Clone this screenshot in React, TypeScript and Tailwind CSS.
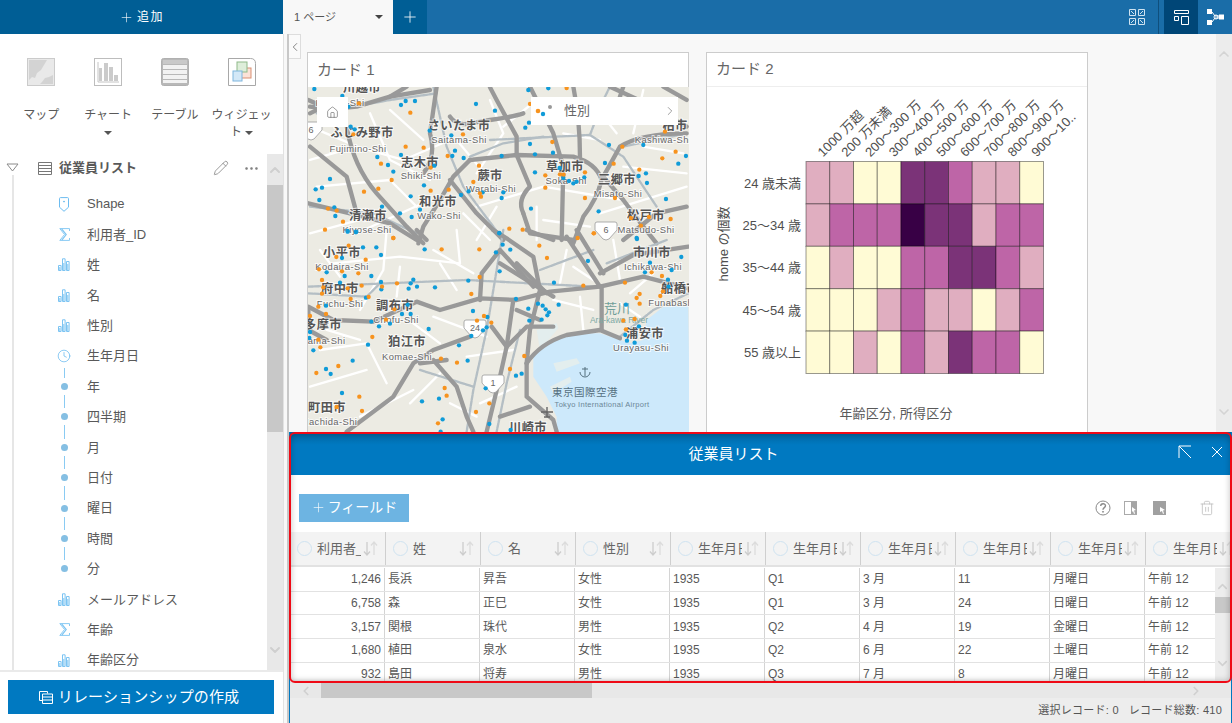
import React from "react";
import { Plus, ChevronLeft, ChevronRight, ChevronUp, ChevronDown, Clock, Pencil, Ellipsis, Home, Trash2 } from "lucide-react";

const BlueA = [[73,267],[775,265],[715,270],[347,303],[375,303],[333,315],[558,312],[615,332],[157,288],[175,320],[717,368],[706,383],[182,380],[194,388],[419,392],[484,406],[720,432],[957,435],[1060,435],[735,463],[789,458],[495,452],[333,465],[262,471],[487,468],[521,474],[635,468],[1188,468],[294,495],[945,489],[1165,491],[809,504],[310,515],[120,537],[735,517],[820,534],[837,543],[850,550],[860,545],[883,532],[1046,528],[1068,520],[1071,549],[77,568],[96,563],[402,556],[536,574],[578,577],[640,577],[513,585],[362,589],[635,594],[88,600],[276,620],[390,629],[723,626],[1128,597],[133,622],[136,648],[330,640],[365,651],[926,634],[173,693],[198,697],[628,699],[1040,714],[433,497]];
const OrangeA = [[830,264],[207,310],[361,338],[720,312],[519,403],[787,426],[997,440],[1125,395],[347,440],[401,443],[473,468],[1157,455],[1117,475],[273,491],[971,491],[422,503],[567,497],[1048,509],[885,517],[766,526],[810,523],[821,524],[305,540],[550,546],[766,563],[265,566],[222,575],[422,572],[476,569],[570,580],[573,590],[885,594],[975,594],[114,626],[140,632],[159,665],[1023,654],[1077,651],[1142,657],[105,689],[1053,677],[658,686],[698,689],[912,700],[190,403],[310,714]];
const BlueB = [[143,5],[168,5],[598,10],[608,44],[631,59],[588,67],[189,52],[229,52],[243,75],[374,58],[126,84],[80,127],[134,138],[214,138],[599,124],[864,93],[1011,27],[1050,98],[1035,127],[1144,81],[1115,120],[1104,149],[1106,170],[505,152],[762,158],[340,149],[332,160],[326,176],[351,170],[405,172],[243,156],[244,178],[120,158],[198,203],[78,227],[648,207],[714,221],[728,227],[737,238],[747,247],[742,256],[776,224],[685,236],[688,272],[725,269],[519,243],[562,261],[978,224],[306,252],[332,252],[323,224],[214,275],[237,289],[270,281],[386,297],[560,292],[549,301],[514,318],[1017,289],[976,315],[981,332],[1004,338],[30,306],[28,324],[40,361],[204,344],[477,346],[503,392],[158,392],[78,417],[92,432],[665,431],[648,437],[557,475],[126,489],[417,506],[366,514],[428,568],[568,582],[422,605],[632,600]];
const OrangeB = [[280,24],[146,47],[425,58],[538,58],[718,47],[833,24],[881,10],[109,81],[197,89],[741,84],[57,118],[126,124],[175,130],[66,150],[185,167],[143,175],[70,172],[66,191],[291,160],[246,170],[539,141],[514,192],[152,207],[206,201],[850,167],[975,158],[1055,127],[1086,138],[1019,192],[1010,204],[1019,221],[1081,198],[1089,184],[55,230],[78,252],[30,258],[283,238],[258,269],[531,272],[552,258],[574,278],[970,272],[1004,267],[978,298],[217,321],[55,329],[61,352],[423,386],[471,398],[115,408],[49,429],[673,378],[630,417],[434,474],[440,497],[178,500],[568,520],[110,531],[186,543],[528,546],[414,580]];

const roadsA = ["M540 480L680 465L850 470Q920 490 935 540Q920 600 880 650L850 730","M680 465L680 410L620 300L600 262","M540 480L490 530L450 600L400 680L385 730","M480 350Q500 380 540 370L600 360Q670 350 700 340","M440 260L430 330L420 400Q440 470 400 520","M60 320Q120 330 200 320L300 290L420 270","M170 380Q190 500 260 580L350 680L400 730","M55 610L180 640L300 670L380 720","M1190 400Q1050 400 990 440L940 530","M940 530L1000 600L1060 680L1100 730","M720 260L790 400L820 500L815 720","M700 640L720 700L850 720","M850 260Q870 360 870 470","M960 260L1090 320L1190 380","M60 440L170 530L200 640","M1190 620L1100 640L1000 720","M700 640Q680 600 720 560L680 465","M55 300L100 320L60 340","M350 260L300 290","M480 540L560 640L640 720","M1000 260L980 320","M1120 260L1190 300"];
const railsA = ["M600 420L900 405L1000 470L1100 620","M430 260L470 440L520 560L640 720","M80 340L300 300L440 280","M540 470L640 430L760 410","M1000 440L1190 400","M60 620L250 640L380 700","M900 405L940 300L960 260"];
const whiteA = ["M60 480L200 440L340 480L480 420","M240 340L300 480L420 540","M560 620L760 560L1000 600","M740 620L740 720","M930 640L1190 560","M1000 500L1190 520","M600 300L640 400L560 520","M900 300L980 400","M80 560L300 540L380 620","M60 700L280 640","M520 640L600 720","M1060 270L1030 400","M60 380L180 430","M300 330L400 420","M500 420L600 540","M740 300L640 380","M1060 440L1180 460","M760 660L900 680","M620 620L560 720","M820 400L930 420","M200 700L420 600"];
const roadsB = ["M25 230L100 270L220 275L350 215L420 240L540 205L650 210L750 185L900 170L1030 140L1165 175","M680 400L690 300L720 180L700 80L620 25L580 0","M905 170L905 300","M900 170L800 20","M540 210L545 130L600 60L700 170","M680 400Q720 340 800 315L900 300L960 325","M575 290L620 350L600 440L560 605","M510 320L400 360L340 400L280 500L140 605","M680 400L680 500L760 570L770 605","M350 0L380 30","M620 350L680 290L760 290","M1165 50L1000 75L900 130","M400 390L470 470L500 560L520 605","M650 240L720 270","M600 100L760 200","M640 210L620 350","M740 190L650 100","M25 240L25 300L80 330","M360 400L440 390","M830 0L910 130","M600 560L690 530","M680 0L760 30"];
const railsB = ["M25 170L500 150L880 170","M610 0L580 180L560 300L520 480L500 605","M660 300L620 460L590 605","M960 320L1060 240L1165 190","M920 100L1100 30","M360 420L520 470","M25 190L200 200L240 160","M720 120L880 60"];
const whiteB = ["M100 100L300 80L480 100","M260 0L250 120L180 240","M400 60L520 130","M420 100L470 180","M60 360L200 340L260 460","M30 470L200 420","M400 260L560 320","M500 380L640 360","M180 560L340 480","M800 60L780 160","M940 30L960 150","M760 210L880 240","M840 200L850 300","M540 520L650 470","M470 0L480 100","M300 110L290 200","M340 280L420 340","M60 60L120 140","M80 300L180 330","M420 430L330 520","M450 520L530 560","M820 110L880 150","M990 190L1060 130","M960 220L1020 260"];

const labels: [string, number, number, number][] = [
  ["川越市",362,92,12],["ふじみ野市",362,137,14],["Fujimino-Shi",358,152,10.5],["さいたま市",459,130,14],["Saitama-Shi",459,143,10.5],["志木市",420,167,14],["Shiki-Shi",421,179,10.5],["蕨市",490,180,14],["Warabi-Shi",491,192,10.5],["草加市",565,171,14],["Soka-Shi",566,184,10.5],["三郷市",617,184,14],["Misato-Shi",618,197,10.5],["和光市",438,206,14],["Wako-Shi",439,219,10.5],["清瀬市",368,220,14],["Kiyose-Shi",367,233,10.5],["松戸市",646,220,14],["Matsudo-Shi",646,233,10.5],["柏市",675,130,14],["Kashiwa-Shi",663,143,10.5],["Kiyose-Shi",340,106,10.5],
  ["小平市",342,257,14],["Kodaira-Shi",342,270,10.5],["府中市",340,293,14],["Fuchu-Shi",340,307,10.5],["調布市",395,310,14],["Chofu-Shi",396,323,10.5],["多摩市",323,329,14],["Tama-Shi",324,344,10.5],["狛江市",407,346,14],["Komae-Shi",407,360,10.5],["市川市",652,257,14],["Ichikawa-Shi",653,270,10.5],["船橋市",680,293,14],["Funabashi",672,306,10.5],["浦安市",645,338,14],["Urayasu-Shi",641,351,10.5],["町田市",327,412,14],["Machida-Shi",329,425,10.5],["川崎市",528,432,14],
];

const Dots = ({ pts, c }: { pts: number[][]; c: string }) => (
  <>{pts.map(([x, y], i) => <circle key={i} cx={x} cy={y} r={6.5} fill={c} />)}</>
);
const Lines = ({ d, c, w, dash }: { d: string[]; c: string; w: number; dash?: string }) => (
  <g fill="none" stroke={c} strokeWidth={w} strokeLinejoin="round" strokeLinecap="round" strokeDasharray={dash}>{d.map((p, i) => <path key={i} d={p} />)}</g>
);

function Shield({ x, y, t }: { x: number; y: number; t: string }) {
  return (
    <g>
      <path d={`M${x - 9} ${y - 8}h18q2 0 2 2v6l-8 9q-3 2-6 0l-8-9v-6q0-2 2-2z`} fill="#fff" stroke="#9a9a9a" strokeWidth={0.8} />
      <text x={x} y={y + 3} textAnchor="middle" fontSize={9} fill="#666">{t}</text>
    </g>
  );
}

function MapArt() {
  return (
    <svg viewBox="308 87 381 345" className="block w-[381px] h-[345px] bg-[#ecebe3]">
      <g transform="translate(290 0) scale(0.3333)">
        <Lines d={whiteA} c="#fff" w={7} />
        <Lines d={railsA} c="#b4bec4" w={7} dash="14 4" />
        <Lines d={roadsA} c="#999999" w={13} />
      </g>
      <g transform="translate(300 230) scale(0.3333)">
        <path d="M1165 225L1090 230L1040 270L1030 330L990 340L900 310L800 310L740 340L700 380L700 440L740 500L770 560L770 610L1170 610Z" fill="#cde9fb" />
        <path d="M760 400L830 385L840 400L770 425ZM710 300L770 280L775 295L720 360ZM750 470L810 440L815 455L760 490Z" fill="#e3eeee" />
        <Lines d={whiteB} c="#fff" w={7} />
        <Lines d={railsB} c="#b4bec4" w={7} dash="14 4" />
        <Lines d={roadsB} c="#999999" w={13} />
      </g>
      <Shield x={311} y={130} t="6" />
      <Shield x={606} y={230} t="6" />
      <Shield x={475} y={328} t="24" />
      <Shield x={493} y={383} t="1" />
      {labels.map(([t, x, y, s], i) => (
        <text key={i} x={x} y={y} textAnchor="middle" fontSize={s > 11 ? 12.2 : 9.4} letterSpacing={0.4} fontWeight={s > 11 ? 700 : 400} fill={s > 11 ? "#555" : "#666"} stroke="#fff" strokeOpacity={0.7} strokeWidth={2} paintOrder="stroke">{t}</text>
      ))}
      <text x={617} y={313} textAnchor="middle" fontSize={13} fill="#6f9e98">荒川</text>
      <text x={619} y={323} textAnchor="middle" fontSize={8.5} fill="#7fa9a3">Ara-kawa River</text>
      <text x={585} y={396} textAnchor="middle" fontSize={10.5} letterSpacing={0.5} fill="#55707f">東京国際空港</text>
      <text x={602} y={407} textAnchor="middle" fontSize={7.5} letterSpacing={0.3} fill="#6b8797">Tokyo International Airport</text>
      <g fill="none" stroke="#55707f" strokeWidth={1}>
        <path d="M585 367v9M580 372a5 5 0 0 0 10 0M582 369h6" />
      </g>
      <path d="M547 407v10M541 412h12M544 417h6" fill="none" stroke="#666" strokeWidth={1.4} />
      <g transform="translate(290 0) scale(0.3333)">
        <Dots pts={BlueA} c="#0f9bd8" />
        <Dots pts={OrangeA} c="#f7931e" />
      </g>
      <g transform="translate(300 230) scale(0.3333)">
        <Dots pts={BlueB} c="#0f9bd8" />
        <Dots pts={OrangeB} c="#f7931e" />
      </g>
    </svg>
  );
}

const L = "#fffbd5", M = "#e0aec0", H = "#be65a7", V = "#7b3378", D = "#380045";
const heat = [
  [M, M, L, L, V, V, H, M, M, L],
  [M, H, H, H, D, V, V, M, H, H],
  [L, M, L, L, H, H, V, V, H, M],
  [L, L, L, M, H, M, M, L, M, H],
  [L, L, M, L, H, M, V, H, H, L],
];
const xLabels = ["1000 万超", "200 万未満", "200～300 万", "300～400 万", "400～500 万", "500～600 万", "600～700 万", "700～800 万", "800～900 万", "900～10.."];
const yLabels = ["24 歳未満", "25～34 歳", "35～44 歳", "45～54 歳", "55 歳以上"];

function Heatmap() {
  const x0 = 99, y0 = 74.5, cw = 23.75, ch = 42.4;
  return (
    <svg viewBox="0 0 381 345" className="block w-[381px] h-[345px]">
      {heat.map((r, j) => r.map((c, i) => (
        <rect key={`${i}-${j}`} x={x0 + i * cw} y={y0 + j * ch} width={cw} height={ch} fill={c} stroke="#000" strokeOpacity={0.4} strokeWidth={1} />
      )))}
      {xLabels.map((t, i) => (
        <text key={t} transform={`translate(${x0 + 17 + i * cw} ${y0 - 4}) rotate(-45)`} fontSize={13} fill="#4f4f4f">{t}</text>
      ))}
      {yLabels.map((t, j) => (
        <text key={t} x={94} y={y0 + 26 + j * ch} textAnchor="end" fontSize={13} fill="#4f4f4f">{t}</text>
      ))}
      <text transform="translate(21 157) rotate(-90)" textAnchor="middle" fontSize={13} fill="#4f4f4f">home の個数</text>
      <text x={189} y={331} textAnchor="middle" fontSize={13} letterSpacing={0.2} fill="#595959">年齢区分, 所得区分</text>
    </svg>
  );
}

const BarsIcon = () => (
  <svg width="12" height="13" viewBox="0 0 12 13" fill="none" stroke="#7cc4f2" strokeWidth="1"><path d="M.5 12.5v-5h2.6v5zM4.500 12.5V.8h2.600v11.700zM8.500 12.5V3.500h2.600v9z" /><path d="M5 12V5h1.600v7zM9 12V6h1.600v6zM1 12V9h1.600v3z" fill="#a6d7f6" stroke="none" /></svg>
);
const SigmaIcon = () => (
  <svg width="11" height="13" viewBox="0 0 11 13" fill="none" stroke="#7cc4f2" strokeWidth="0.9"><path d="M10.500 3V.6H.8L5.500 6.500.8 12.400h9.700V10" /><path d="M2.600.8 7.200 6.500 2.800 12.200" strokeWidth="1.200" /></svg>
);
const ShapeIcon = () => (
  <svg width="10" height="15" viewBox="0 0 10 15" fill="none" stroke="#6dbcf0" strokeWidth="1"><path d="M1.500.6h7q1 0 1 1v8.600L5 14.300.5 10.200V1.600q0-1 1-1z" /><circle cx="5" cy="4.600" r=".5" fill="#6dbcf0" /></svg>
);

type Kind = "shape" | "sigma" | "bars" | "clock" | "dot" | "dotLast";
const fields: [string, Kind][] = [
  ["Shape", "shape"], ["利用者_ID", "sigma"], ["姓", "bars"], ["名", "bars"], ["性別", "bars"], ["生年月日", "clock"],
  ["年", "dot"], ["四半期", "dot"], ["月", "dot"], ["日付", "dot"], ["曜日", "dot"], ["時間", "dot"], ["分", "dotLast"],
  ["メールアドレス", "bars"], ["年齢", "sigma"], ["年齢区分", "bars"],
];

function FieldIcon({ k }: { k: Kind }) {
  if (k === "dot" || k === "dotLast" || k === "clock") {
    return (
      <div className="h-full w-4 flex flex-col items-center justify-center">
        <div className={`w-px flex-1 mb-[5px] ${k === "clock" ? "bg-transparent" : "bg-[#8acbf3]"}`} />
        {k === "clock" ? <Clock size={14} strokeWidth={1.2} color="#5db4ee" className="shrink-0" /> : <div className="w-[7px] h-[7px] rounded-full bg-[#85bfe3] shrink-0" />}
        <div className={`w-px flex-1 mt-[5px] ${k === "dotLast" ? "bg-transparent" : "bg-[#8acbf3]"}`} />
      </div>
    );
  }
  return (
    <div className="h-full w-4 flex items-center justify-center">
      {k === "shape" ? <ShapeIcon /> : k === "sigma" ? <SigmaIcon /> : <BarsIcon />}
    </div>
  );
}

const MapTool = () => (
  <svg width="28" height="28" viewBox="0 0 28 28"><rect x=".5" y=".5" width="27" height="27" fill="#e9e9e9" stroke="#cbcbcb" /><path d="M2 22l3-3 3 1 2-5 4-3 3-5 3-5H2zM26 17l-4 2-4 1-3 4-2 2h13z" fill="#d3d3d3" /></svg>
);
const ChartTool = () => (
  <svg width="28" height="28" viewBox="0 0 28 28"><rect x=".5" y=".5" width="27" height="27" fill="#fff" stroke="#bdbdbd" /><path d="M4 4v20h21" fill="none" stroke="#c4c4c4" /><path d="M5 23V10h3v13zM10 23V5h4v18zM15 23V9h4v14zM20 23v-6h4v6z" fill="#cbcbcb" /></svg>
);
const TableTool = () => (
  <svg width="28" height="28" viewBox="0 0 28 28"><rect x=".5" y=".5" width="27" height="27" rx="2" fill="#b8b8b8" stroke="#b0b0b0" /><rect x="2" y="2" width="24" height="4" fill="#c9c9c9" /><path d="M2 7h24v4H2zM2 12h24v4H2zM2 17h24v4H2zM2 22h24v3H2z" fill="#f2f2f2" /></svg>
);
const WidgetTool = () => (
  <svg width="28" height="28" viewBox="0 0 28 28"><path d="M.5 27.500V.5h22q5 0 5 5v22z" fill="#fff" stroke="#a8a8a8" /><rect x="13" y="10" width="10" height="10" fill="#fbe2d8" stroke="#d98f72" /><rect x="9" y="4" width="10" height="10" fill="#deeeda" stroke="#8fb98a" /><rect x="5" y="13" width="9" height="10" fill="#d3e8f7" stroke="#7fb6de" /></svg>
);

const Caret = ({ c = "#555" }: { c?: string }) => <span className="inline-block w-0 h-0 border-l-[4px] border-r-[4px] border-t-[4px] border-l-transparent border-r-transparent align-middle" style={{ borderTopColor: c }} />;

function Sidebar() {
  return (
    <div className="w-[283px] h-full bg-white flex flex-col shrink-0">
      <div className="h-[120px] px-2 pt-[24px] grid grid-cols-4 text-[12px] leading-[17px] text-[#595959] text-center shrink-0">
        <div className="flex flex-col items-center"><MapTool /><div className="mt-[21px]">マップ</div></div>
        <div className="flex flex-col items-center"><ChartTool /><div className="mt-[21px]">チャート<br /><Caret /></div></div>
        <div className="flex flex-col items-center"><TableTool /><div className="mt-[21px]">テーブル</div></div>
        <div className="flex flex-col items-center"><WidgetTool /><div className="mt-[21px]">ウィジェッ<br />ト <Caret /></div></div>
      </div>
      <div className="flex-1 flex min-h-0">
        <div className="flex-1 overflow-hidden">
          <div className="h-[28px] flex items-center text-[#595959]">
            <svg width="14" height="10" viewBox="0 0 14 10" className="ml-[6px]"><path d="M1 1h11L6.500 8z" fill="none" stroke="#8a8a8a" /></svg>
            <svg width="14" height="13" viewBox="0 0 14 13" fill="none" stroke="#777" className="ml-[18px]"><path d="M.5.5h13v12H.5zM.5 3.500h13M.5 6.500h13M.5 9.500h13" /></svg>
            <span className="ml-[7px] text-[13px] font-bold">従業員リスト</span>
            <Pencil size={16} strokeWidth={1.1} color="#777" className="ml-[76px]" />
            <Ellipsis size={17} strokeWidth={1.6} color="#777" className="ml-[14px]" />
          </div>
          <div className="ml-3 border-l-2 border-[#e6e6e6] -mt-[7px] pt-[14px] pl-[42px] h-[600px]">
            {fields.map(([t, k]) => (
              <div key={t} className="h-[30.4px] flex items-center text-[13px] text-[#595959]">
                <FieldIcon k={k} />
                <span className="ml-[15px]">{t}</span>
              </div>
            ))}
          </div>
        </div>
        <div className="w-4 bg-[#e8e8e8] flex flex-col shrink-0">
          <div className="h-[31px] flex items-center justify-center"><ChevronUp size={16} color="#cfcfcf" strokeWidth={3} /></div>
          <div className="h-[247px] bg-[#c8c8c8]" />
          <div className="flex-1 flex items-end justify-center pb-[12px]"><ChevronDown size={16} color="#cfcfcf" strokeWidth={3} /></div>
        </div>
      </div>
      <div className="h-[53px] border-t-2 border-[#eaeaea] px-2 pt-[8px] shrink-0">
        <div className="w-[266px] h-[34px] bg-[#0079c1] flex items-center justify-center text-white text-[15px] tracking-[0.15px] pr-[4px]">
          <svg width="14" height="14" viewBox="0 0 14 14" fill="none" stroke="#fff" className="mr-[5px]"><path d="M.5 1.500h8v2M.5 1.500v9h3" /><path d="M3.500 4h10v9.500h-10zM3.500 7h10M3.500 10h10" /></svg>
          リレーションシップの作成
        </div>
      </div>
    </div>
  );
}

function TopBar() {
  return (
    <div className="h-[34px] flex shrink-0 bg-[#1a6da8] text-white">
      <div className="w-[283px] bg-[#005e95] flex items-center justify-center text-[12px] tracking-[1.5px]">
        <Plus size={15} strokeWidth={1} className="mr-[3px]" />追加
      </div>
      <div className="w-[110px] bg-[#f8f8f8] flex items-center text-[#555] text-[11px] pl-[11px] pr-[10px] justify-between">
        <span>1 ページ</span><Caret c="#444" />
      </div>
      <div className="w-[34px] bg-[#005e95] flex items-center justify-center"><Plus size={18} strokeWidth={1.1} /></div>
      <div className="flex-1" />
      <div className="w-[16px] flex items-center">
        <svg width="16" height="16" viewBox="0 0 16 16" fill="none" stroke="#cfe3f1" strokeWidth="1" className="shrink-0"><path d="M.5.5h6v6h-6zM9.500.5h6v6h-6zM.5 9.500h6v6h-6zM9.500 9.500h6v6h-6z" /><path d="M2 2l3 3M14 2l-3 3M5 11l-3 3M11 11l3 3" /></svg>
      </div>
      <div className="w-[14px] border-r border-[#0f4f7d] mr-[5px]" />
      <div className="w-[34px] bg-[#004677] flex items-center justify-center">
        <svg width="15" height="15" viewBox="0 0 15 15" fill="none" stroke="#fff" strokeWidth="1"><path d="M.5.5h14v3H.5zM.5 6.500h4v4h-4zM7.500 6.500h7v8h-7z" /></svg>
      </div>
      <div className="w-[34px] flex items-center justify-center">
        <svg width="17" height="16" viewBox="0 0 17 16" fill="#fff"><rect y="0" width="5" height="5" /><rect y="11" width="5" height="5" /><rect x="12" y="5.500" width="5" height="5" /><path d="M5 3l3 4h4M5 13l3-4h4" fill="none" stroke="#fff" /><circle cx="9" cy="8" r="2" fill="none" stroke="#fff" /></svg>
      </div>
    </div>
  );
}

const headCols = ["利用者_ID", "姓", "名", "性別", "生年月日", "生年月日", "生年月日", "生年月日", "生年月日", "生年月日"];
const rows = [
  ["1,246", "長浜", "昇吾", "女性", "1935", "Q1", "3 月", "11", "月曜日", "午前 12"],
  ["6,758", "森", "正巳", "女性", "1935", "Q1", "3 月", "24", "日曜日", "午前 12"],
  ["3,157", "関根", "珠代", "男性", "1935", "Q2", "4 月", "19", "金曜日", "午前 12"],
  ["1,680", "植田", "泉水", "女性", "1935", "Q2", "6 月", "22", "土曜日", "午前 12"],
  ["932", "島田", "将寿", "男性", "1935", "Q3", "7 月", "8", "月曜日", "午前 12"],
];

const SortArrows = () => (
  <svg width="15" height="15" viewBox="0 0 15 15" fill="none" stroke="#cdcdcd" strokeWidth="1.300" className="shrink-0 ml-[2px]"><path d="M4 1v13M1 10.500 4 14l3-3.500" /><path d="M11 14V1M8 4.500 11 1l3 3.500" stroke="#dcdcdc" /></svg>
);

function DataPanel() {
  return (
    <div className="relative h-[291px] shrink-0 bg-[#ededed] border-x border-[#0079c1] flex flex-col">
      <div className="h-[43px] bg-[#0079c1] bg-gradient-to-b from-[#00659f] to-[#0079c1] to-[30%] flex items-center justify-center text-white text-[15px] pt-[2px] pr-[54px] shrink-0 relative">
        従業員リスト
        <div className="absolute right-[8px] top-[13px] flex items-center gap-[19px]">
          <svg width="14" height="14" viewBox="0 0 14 14" fill="none" stroke="#fff" strokeWidth="1"><path d="M1 13V1h12M1 1l12 12" /></svg>
          <svg width="12" height="12" viewBox="0 0 12 12" fill="none" stroke="#fff" strokeWidth="1"><path d="M1 1l10 10M11 1 1 11" /></svg>
        </div>
      </div>
      <div className="h-[57px] bg-white flex items-center justify-between pl-[9px] pr-[16px] shrink-0">
        <div className="w-[110px] h-[28px] mt-[8px] bg-[#6db4e2] text-white text-[14px] flex items-center justify-center">
          <Plus size={15} strokeWidth={1} className="mr-[2px]" />フィールド
        </div>
        <div className="flex items-center mt-[8px] text-[#8a8a8a]">
          <svg width="16" height="16" viewBox="0 0 16 16" fill="none" stroke="#8a8a8a"><circle cx="8" cy="8" r="7" /><path d="M5.700 6c0-3 4.800-3 4.800-.2 0 1.800-2.500 1.800-2.500 3.900" strokeWidth="1.400" /><circle cx="8" cy="11.800" r=".5" fill="#8a8a8a" /></svg>
          <svg width="14" height="14" viewBox="0 0 14 14" className="ml-[13px]"><rect x=".5" y=".5" width="12" height="13" fill="#fff" stroke="#aaa" /><rect x="7" y="1" width="6" height="12" fill="#a5a5a5" /><path d="M8 6l4 3-2 .5 1 3-1 .5-1-3-1 1z" fill="#fff" /></svg>
          <svg width="14" height="14" viewBox="0 0 14 14" className="ml-[15px]"><rect width="13" height="14" fill="#a0a0a0" /><path d="M7 6l5 3-2 .5 1 3-1 .5-1-3-2 1z" fill="#fff" /></svg>
          <Trash2 size={16} strokeWidth={1.2} color="#bdbdbd" className="ml-[32px]" />
        </div>
      </div>
      <div className="h-[33px] bg-[#f3f3f3] flex overflow-hidden shrink-0">
        {headCols.map((t, i) => (
          <div key={i} className={`${i === 0 ? "w-[96px]" : "w-[95px]"} h-full border-r border-[#cfcfcf] flex items-center pl-[7px] shrink-0`}>
            <span className="w-[15px] h-[15px] rounded-full border border-[#cfe3f1] shrink-0" />
            <span className="w-[44px] ml-[5px] text-[13px] text-[#666] whitespace-nowrap overflow-hidden shrink-0">{t}</span>
            <SortArrows />
          </div>
        ))}
      </div>
      <div className="h-[2px] bg-[#e2e2e2] shrink-0" />
      <div className="h-[116px] flex shrink-0 bg-white overflow-hidden pt-px shadow-[inset_0_-4px_4px_-3px_rgba(0,0,0,0.2)]">
        <div className="w-[925px] overflow-hidden">
          {rows.map((r, j) => (
            <div key={j} className="h-[23.7px] flex border-b border-[#e2e2e2] text-[12px] text-[#595959]">
              {r.map((c, i) => (
                <div key={i} className={`w-[95px] shrink-0 border-r border-[#d4d4d4] h-full flex items-center whitespace-nowrap overflow-hidden ${i === 0 ? "justify-end pr-[3px]" : "pl-[3px]"}`}>{c}</div>
              ))}
            </div>
          ))}
        </div>
        <div className="w-[15px] bg-[#ededed] flex flex-col items-center">
          <div className="h-[28px] flex items-center justify-center pt-[8px]"><ChevronUp size={15} color="#d2d2d2" strokeWidth={2.5} /></div>
          <div className="w-full h-[16px] bg-[#c8c8c8] mt-[1px]" />
          <div className="mt-[43px]"><ChevronDown size={15} color="#d2d2d2" strokeWidth={2.5} /></div>
        </div>
      </div>
      <div className="h-[15px] bg-[#e8e8e8] flex items-center shrink-0">
        <div className="w-[31px] flex justify-center"><ChevronLeft size={14} color="#d0d0d0" strokeWidth={3} /></div>
        <div className="w-[271px] h-full bg-[#c8c8c8]" />
        <div className="flex-1 flex justify-end pr-[28px]"><ChevronRight size={14} color="#d0d0d0" strokeWidth={3} /></div>
      </div>
      <div className="flex-1 flex items-center justify-end pr-[9px] text-[11px] tracking-[0.25px] text-[#555] gap-[10px]">
        <span>選択レコード: 0</span><span>レコード総数: 410</span>
      </div>
      <div className="absolute -left-px -right-px top-0 h-[251px] border-2 border-[#ef0a16] rounded-[6px] shadow-[inset_0_0_6px_rgba(0,0,0,0.25)] pointer-events-none" />
    </div>
  );
}

function Main() {
  return (
    <div className="flex-1 min-w-0 h-full flex flex-col bg-[#f8f8f8]">
      <div className="h-[398px] flex relative overflow-hidden shrink-0">
        <div className="absolute left-0 top-0 w-[12px] h-[25px] bg-[#fafafa] border border-l-0 border-[#dddddd] flex items-center justify-center">
          <ChevronLeft size={14} strokeWidth={1.2} color="#555" className="shrink-0" />
        </div>
        <div className="flex-1 flex gap-[17px] pl-[18px] pt-[18px]">
          <div className="w-[382px] h-[400px] bg-white border border-[#cccccc] shrink-0">
            <div className="h-[34px] flex items-center pl-[9px] text-[15px] text-[#666]">カード 1</div>
            <div className="relative">
              <MapArt />
              <div className="absolute left-[9px] top-[10px] w-[31px] h-[30px] bg-white flex items-center justify-center"><Home size={13} strokeWidth={1.2} color="#666" /></div>
              <div className="absolute left-[223px] top-[10px] w-[147px] h-[28px] bg-white flex items-center text-[13px] text-[#666]">
                <svg width="18" height="14" viewBox="0 0 18 14" className="ml-[3px] shrink-0"><circle cx="4" cy="7" r="2.300" fill="#f7931e" /><circle cx="9" cy="10" r="2.200" fill="#0f9bd8" /><circle cx="16" cy="3" r="2" fill="#999" /></svg>
                <span className="ml-[12px]">性別</span>
                <ChevronRight size={14} strokeWidth={1.2} color="#777" className="ml-auto mr-[1px]" />
              </div>
            </div>
          </div>
          <div className="w-[382px] h-[400px] bg-white border border-[#cccccc] shrink-0">
            <div className="h-[34px] flex items-center pl-[9px] text-[15px] text-[#666] border-b border-[#eeeeee]">カード 2</div>
            <Heatmap />
          </div>
        </div>
        <div className="w-[16px] bg-[#ececec] flex flex-col items-center justify-between py-[12px] shrink-0">
          <ChevronUp size={16} color="#d4d4d4" strokeWidth={2.5} />
          <ChevronDown size={16} color="#d4d4d4" strokeWidth={2.5} />
        </div>
      </div>
      <DataPanel />
    </div>
  );
}

export default function App() {
  return (
    <div className="w-[1232px] h-[723px] flex flex-col overflow-hidden bg-white font-['Liberation_Sans','Noto_Sans_CJK_JP',sans-serif]">
      <TopBar />
      <div className="flex-1 flex min-h-0">
        <Sidebar />
        <div className="w-[6px] h-full bg-[#f8f8f8] border-r-2 border-[#c8c8c8] border-l border-l-[#e2e2e2] shrink-0" />
        <Main />
      </div>
    </div>
  );
}
